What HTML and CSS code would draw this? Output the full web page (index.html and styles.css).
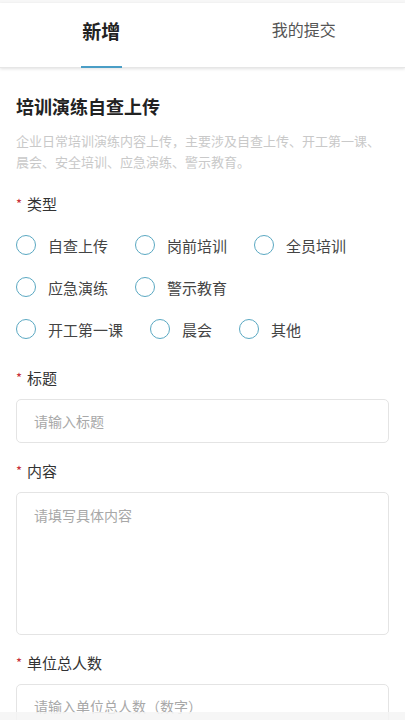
FILE: index.html
```html
<!DOCTYPE html>
<html lang="zh-CN">
	<head>
		<meta charset="UTF-8" />
		<meta name="viewport" content="width=device-width, initial-scale=1.0" />
		<title>培训演练自查上传</title>
		<link rel="stylesheet" href="styles.css">
	</head>
	<body>
		<div class="status-strip"></div>
		<div class="tabs">
			<div class="tab active">新增</div>
			<div class="tab">我的提交</div>
		</div>

		<div class="form">
			<h1 class="form-title">培训演练自查上传</h1>
			<p class="form-desc">企业日常培训演练内容上传，主要涉及自查上传、开工第一课、晨会、安全培训、应急演练、警示教育。</p>

			<div class="label"><span class="req">*</span>类型</div>
			<div class="radio-group">
				<div class="radio-row">
					<label class="radio"><span class="dot"></span>自查上传</label>
					<label class="radio"><span class="dot"></span>岗前培训</label>
					<label class="radio"><span class="dot"></span>全员培训</label>
				</div>
				<div class="radio-row">
					<label class="radio"><span class="dot"></span>应急演练</label>
					<label class="radio"><span class="dot"></span>警示教育</label>
				</div>
				<div class="radio-row">
					<label class="radio"><span class="dot"></span>开工第一课</label>
					<label class="radio"><span class="dot"></span>晨会</label>
					<label class="radio"><span class="dot"></span>其他</label>
				</div>
			</div>

			<div class="label"><span class="req">*</span>标题</div>
			<div class="input">请输入标题</div>

			<div class="label"><span class="req">*</span>内容</div>
			<div class="input textarea">请填写具体内容</div>

			<div class="label"><span class="req">*</span>单位总人数</div>
			<div class="input">请输入单位总人数（数字）</div>
		</div>

		<div class="bottom-fade"></div>
	</body>
</html>
```

FILE: styles.css
```css
body {
	font-family: "Noto Sans CJK SC", "Noto Sans", sans-serif;
	background-color: #fff;
	margin: 0;
	padding: 0;
	color: #333;
	overflow: hidden;
	height: 720px;
}

.status-strip {
	height: 3px;
	background-color: #f7f7f7;
}

.tabs {
	display: flex;
	height: 64px;
	background-color: #fff;
	box-shadow: 0 1px 3px rgba(0, 0, 0, 0.12);
	border-bottom: 1px solid #e6e6e6;
}

.tab {
	flex: 1;
	display: flex;
	justify-content: center;
	align-items: center;
	padding-bottom: 12px;
	font-size: 16px;
	color: #555;
	position: relative;
}

.tab.active {
	font-size: 19px;
	font-weight: bold;
	color: #222;
	padding-bottom: 9px;
}

.tab.active::after {
	content: "";
	position: absolute;
	bottom: -1px;
	left: 50%;
	width: 41px;
	height: 2px;
	margin-left: -20px;
	background-color: #4a9ec6;
}

.form {
	padding: 0 16px;
}

.form-title {
	font-size: 18px;
	font-weight: bold;
	color: #222;
	margin: 24px 0 0;
	line-height: 28px;
}

.form-desc {
	font-size: 13px;
	color: #c9c9c9;
	line-height: 21px;
	margin: 10px 0 0;
}

.label {
	font-size: 15px;
	color: #333;
	line-height: 22px;
	margin-top: 17px;
}

.form-desc + .label {
	margin-top: 21px;
}

.req {
	color: #c8303a;
	font-size: 13px;
	margin-right: 5px;
	position: relative;
	top: -1px;
}

.radio-group {
	margin-top: 8px;
}

.radio-row {
	display: flex;
	gap: 27px;
	height: 42px;
	align-items: center;
}

.radio {
	display: flex;
	align-items: center;
	gap: 12px;
	font-size: 15px;
	color: #444;
}

.dot {
	width: 18px;
	height: 18px;
	border: 1.5px solid #5aa8c2;
	border-radius: 50%;
}

.input {
	margin-top: 9px;
	height: 44px;
	box-sizing: border-box;
	border: 1px solid #e4e4e4;
	border-radius: 5px;
	padding: 0 17px;
	display: flex;
	align-items: center;
	font-size: 14px;
	color: #a8a8a8;
}

.input.textarea {
	height: 143px;
	align-items: flex-start;
	padding-top: 12px;
}

.bottom-fade {
	position: fixed;
	left: 0;
	right: 0;
	bottom: 0;
	height: 8px;
	background-color: rgba(245, 245, 245, 0.85);
}
```
